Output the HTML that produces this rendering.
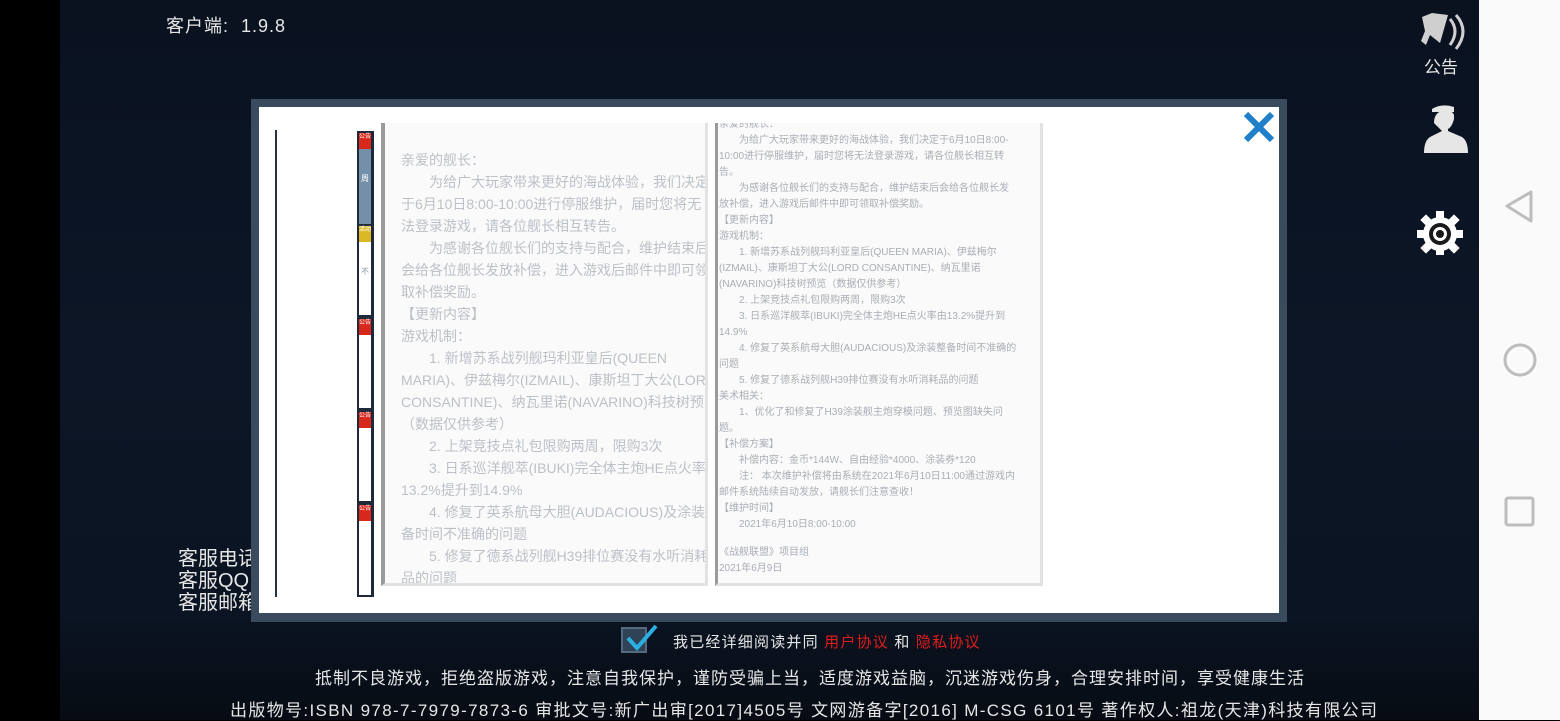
<!DOCTYPE html>
<html><head><meta charset="utf-8"><style>
*{margin:0;padding:0;box-sizing:border-box}
body{width:1560px;height:720px;overflow:hidden;background:#000;position:relative;font-family:"Liberation Sans","Noto Sans CJK SC",sans-serif}
.abs{position:absolute}
#bg{left:60px;top:0;width:1419px;height:720px;background:linear-gradient(180deg,#0a1220 0%,#0c1626 50%,#0b1422 85%,#070c14 100%)}
#nav{left:1479px;top:0;width:81px;height:720px;background:#fafafa}
.w{color:#e6e6e6}
#outer{left:251px;top:99px;width:1036px;height:523px;background:#3b4b5e}
#inner{left:259px;top:107px;width:1020px;height:506px;background:#fff}
.p1{left:381px;top:123px;width:327px;height:463px;background:#fafafa;border-left:4px solid #9a9a9a;border-right:3px solid #e2e2e2;border-bottom:3px solid #e2e2e2;overflow:hidden}
.p1 div{white-space:nowrap;font-size:14px;line-height:22px;color:#bcc1c8;position:absolute;left:16px}
.p2{left:715px;top:123px;width:328px;height:463px;background:#fafafa;border-left:3px solid #9a9a9a;border-right:3px solid #e2e2e2;border-bottom:3px solid #e2e2e2;overflow:hidden}
.p2 div{white-space:nowrap;font-size:10px;line-height:16px;color:#a9aeb6;position:absolute;left:1px}
.tab{position:absolute;left:0;width:12px;background:#fff}
.lab{position:absolute;left:0;top:0;width:12px;height:16px;background:#d8281c;color:#fff;font-size:6px;line-height:8px;text-align:center}
</style></head><body>
<div id="bg" class="abs"></div>
<div id="nav" class="abs">
<svg width="81" height="720" style="position:absolute;left:0;top:0">
<path d="M28 206 L52 192 L52 221 Z" fill="none" stroke="#bdbdbd" stroke-width="3" stroke-linejoin="round"/>
<circle cx="41" cy="360" r="15" fill="none" stroke="#bdbdbd" stroke-width="3"/>
<rect x="27" y="498" width="27" height="27" rx="2" fill="none" stroke="#bdbdbd" stroke-width="3"/>
</svg></div>
<div class="abs w" style="left:166px;top:12px;font-size:18px;letter-spacing:1px">客户端:&nbsp; 1.9.8</div>
<svg class="abs" style="left:1410px;top:5px" width="70" height="250">
<path d="M12 12 L22 8 L38 10 L30 38 L20 30 L16 40 L11 36 L15 26 Z" fill="#cfcfcf"/>
<path d="M40 14 q10 12 0 26" stroke="#cfcfcf" stroke-width="3" fill="none"/>
<path d="M46 10 q14 16 0 34" stroke="#cfcfcf" stroke-width="3" fill="none"/>
<path d="M24 118 q0-10 8-12 q10-2 12 4 l0 4 q-2 8 -6 10 l0 2 l14 6 q6 4 6 16 l-44 0 q0-12 6-16 l12-6 z" fill="#e6e6e6"/>
<path d="M22 104 q10-6 22-2 l0 5 l-22 0 z" fill="#e6e6e6"/>
<circle cx="30" cy="229" r="17" fill="#fff"/>
<g fill="#fff"><rect x="26" y="206" width="8" height="8"/><rect x="26" y="244" width="8" height="8"/><rect x="7" y="225" width="8" height="8"/><rect x="45" y="225" width="8" height="8"/>
<rect x="12" y="211" width="8" height="8" transform="rotate(45 16 215)"/><rect x="40" y="211" width="8" height="8" transform="rotate(45 44 215)"/><rect x="12" y="239" width="8" height="8" transform="rotate(45 16 243)"/><rect x="40" y="239" width="8" height="8" transform="rotate(45 44 243)"/></g>
<circle cx="30" cy="229" r="11" fill="#1a1a1a"/><circle cx="30" cy="229" r="7" fill="#fff"/><circle cx="30" cy="229" r="4" fill="#1a1a1a"/>
</svg>
<div class="abs w" style="left:1424px;top:53px;font-size:17px">公告</div>
<div class="abs w" style="left:178px;top:548px;font-size:20px;line-height:22px">客服电话<br>客服QQ<br>客服邮箱</div>
<div id="outer" class="abs"></div>
<div id="inner" class="abs"></div>
<div class="abs" style="left:275px;top:130px;width:2px;height:467px;background:#2a3340"></div>
<div class="abs" style="left:357px;top:131px;width:17px;height:466px;background:#1e2a3a;border:2px solid #1e2a3a">
<div class="tab" style="top:0;height:91px;background:#7390a8"><div class="lab">公告</div><div style="position:absolute;top:40px;left:2px;color:#fff;font-size:8px">周</div></div>
<div class="tab" style="top:93px;height:89px"><div class="lab" style="background:#d9b824">活动</div><div style="position:absolute;top:40px;left:2px;color:#8a96a4;font-size:8px">不</div></div>
<div class="tab" style="top:186px;height:89px"><div class="lab">公告</div></div>
<div class="tab" style="top:279px;height:89px"><div class="lab">公告</div></div>
<div class="tab" style="top:372px;height:90px"><div class="lab">公告</div></div>
</div>
<div class="abs p1">
<div style="top:26px">亲爱的舰长：</div>
<div style="top:48px">　　为给广大玩家带来更好的海战体验，我们决定</div>
<div style="top:70px">于6月10日8:00-10:00进行停服维护，届时您将无</div>
<div style="top:92px">法登录游戏，请各位舰长相互转告。</div>
<div style="top:114px">　　为感谢各位舰长们的支持与配合，维护结束后</div>
<div style="top:136px">会给各位舰长发放补偿，进入游戏后邮件中即可领</div>
<div style="top:158px">取补偿奖励。</div>
<div style="top:180px">【更新内容】</div>
<div style="top:202px">游戏机制：</div>
<div style="top:224px">　　1. 新增苏系战列舰玛利亚皇后(QUEEN</div>
<div style="top:246px">MARIA)、伊兹梅尔(IZMAIL)、康斯坦丁大公(LORD</div>
<div style="top:268px">CONSANTINE)、纳瓦里诺(NAVARINO)科技树预览</div>
<div style="top:290px">（数据仅供参考）</div>
<div style="top:312px">　　2. 上架竞技点礼包限购两周，限购3次</div>
<div style="top:334px">　　3. 日系巡洋舰萃(IBUKI)完全体主炮HE点火率由</div>
<div style="top:356px">13.2%提升到14.9%</div>
<div style="top:378px">　　4. 修复了英系航母大胆(AUDACIOUS)及涂装整</div>
<div style="top:400px">备时间不准确的问题</div>
<div style="top:422px">　　5. 修复了德系战列舰H39排位赛没有水听消耗</div>
<div style="top:444px">品的问题</div>
</div>
<div class="abs p2">
<div style="top:-6px">亲爱的舰长：</div>
<div style="top:10px">　　为给广大玩家带来更好的海战体验，我们决定于6月10日8:00-</div>
<div style="top:26px">10:00进行停服维护，届时您将无法登录游戏，请各位舰长相互转</div>
<div style="top:42px">告。</div>
<div style="top:58px">　　为感谢各位舰长们的支持与配合，维护结束后会给各位舰长发</div>
<div style="top:74px">放补偿，进入游戏后邮件中即可领取补偿奖励。</div>
<div style="top:90px">【更新内容】</div>
<div style="top:106px">游戏机制：</div>
<div style="top:122px">　　1. 新增苏系战列舰玛利亚皇后(QUEEN MARIA)、伊兹梅尔</div>
<div style="top:138px">(IZMAIL)、康斯坦丁大公(LORD CONSANTINE)、纳瓦里诺</div>
<div style="top:154px">(NAVARINO)科技树预览（数据仅供参考）</div>
<div style="top:170px">　　2. 上架竞技点礼包限购两周，限购3次</div>
<div style="top:186px">　　3. 日系巡洋舰萃(IBUKI)完全体主炮HE点火率由13.2%提升到</div>
<div style="top:202px">14.9%</div>
<div style="top:218px">　　4. 修复了英系航母大胆(AUDACIOUS)及涂装整备时间不准确的</div>
<div style="top:234px">问题</div>
<div style="top:250px">　　5. 修复了德系战列舰H39排位赛没有水听消耗品的问题</div>
<div style="top:266px">美术相关：</div>
<div style="top:282px">　　1、优化了和修复了H39涂装舰主炮穿模问题、预览图缺失问</div>
<div style="top:298px">题。</div>
<div style="top:314px">【补偿方案】</div>
<div style="top:330px">　　补偿内容：金币*144W、自由经验*4000、涂装券*120</div>
<div style="top:346px">　　注： 本次维护补偿将由系统在2021年6月10日11:00通过游戏内</div>
<div style="top:362px">邮件系统陆续自动发放，请舰长们注意查收！</div>
<div style="top:378px">【维护时间】</div>
<div style="top:394px">　　2021年6月10日8:00-10:00</div>
<div style="top:422px">《战舰联盟》项目组</div>
<div style="top:438px">2021年6月9日</div>
</div>
<svg class="abs" style="left:1241px;top:109px" width="36" height="36"><path d="M5 5 L31 31 M31 5 L5 31" stroke="#1f80c9" stroke-width="6"/></svg>
<div class="abs" style="left:621px;top:627px;width:26px;height:26px;background:#2f4256;border:2px solid #56697e"></div>
<svg class="abs" style="left:624px;top:624px" width="36" height="30"><path d="M4 14 L13 24 L32 2" stroke="#29b0e0" stroke-width="4" fill="none"/></svg>
<div class="abs w" style="left:673px;top:631px;font-size:15px;letter-spacing:1.2px">我已经详细阅读并同 <span style="color:#e21c1c">用户协议</span> 和 <span style="color:#e21c1c">隐私协议</span></div>
<div class="abs w" style="left:315px;top:664px;font-size:17px;letter-spacing:1px;white-space:nowrap">抵制不良游戏，拒绝盗版游戏，注意自我保护，谨防受骗上当，适度游戏益脑，沉迷游戏伤身，合理安排时间，享受健康生活</div>
<div class="abs w" style="left:230px;top:696px;font-size:17px;letter-spacing:1.35px;white-space:nowrap">出版物号:ISBN 978-7-7979-7873-6 审批文号:新广出审[2017]4505号 文网游备字[2016] M-CSG 6101号 著作权人:祖龙(天津)科技有限公司</div>
</body></html>
